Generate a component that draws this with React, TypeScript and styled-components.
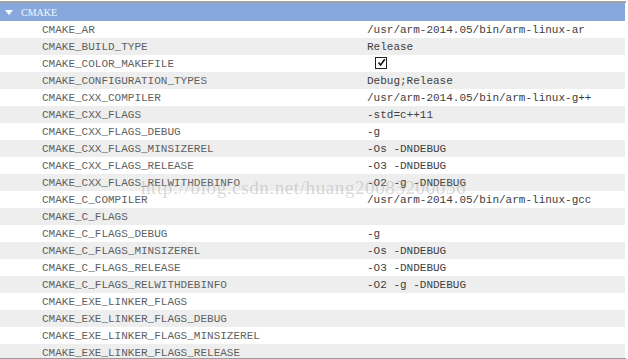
import React from 'react';
import styled, { createGlobalStyle } from 'styled-components';

const Global = createGlobalStyle`
  html, body {
    margin: 0;
    padding: 0;
    background: #fff;
  }
`;

const S = {
  Frame: styled.div`
    position: relative;
    width: 626px;
    height: 355px;
    margin-top: 1px;
    border-top: 2px solid #a3a3a3;
    border-bottom: 2px solid #9c9c9c;
    overflow: hidden;
    font-family: 'Liberation Mono', 'DejaVu Sans Mono', monospace;
    font-size: 11px;
  `,
  Header: styled.div`
    display: flex;
    align-items: center;
    gap: 8px;
    height: 18px;
    width: 625px;
    padding-left: 5px;
    box-sizing: border-box;
    background: #86a8dc;
    color: #f4f7fc;
    font-family: 'Liberation Serif', serif;
    font-size: 10px;
  `,
  Arrow: styled.span`
    width: 0;
    height: 0;
    border-left: 4px solid transparent;
    border-right: 4px solid transparent;
    border-top: 5px solid #fff;
  `,
  Row: styled.div<{ $alt: boolean }>`
    display: grid;
    grid-template-columns: 367px 1fr;
    align-items: center;
    height: 17px;
    width: 625px;
    background: ${(p) => (p.$alt ? '#eeeeee' : '#ffffff')};
  `,
  Name: styled.span`
    padding-left: 42px;
    color: #5f5f5f;
    white-space: nowrap;
  `,
  Value: styled.span`
    color: #3e3e3e;
    white-space: nowrap;
  `,
  Check: styled.span`
    display: inline-flex;
    align-items: center;
    justify-content: center;
    width: 10px;
    height: 10px;
    margin-left: 8px;
    border: 1px solid #222;
    background: #fff;
  `,
  Watermark: styled.div`
    position: absolute;
    left: 141px;
    top: 174px;
    font-family: 'Liberation Serif', serif;
    font-size: 19px;
    letter-spacing: 0.6px;
    color: rgba(170, 170, 170, 0.45);
    pointer-events: none;
    white-space: nowrap;
  `,
};

const rows: [string, string | 'check'][] = [
  ['CMAKE_AR', '/usr/arm-2014.05/bin/arm-linux-ar'],
  ['CMAKE_BUILD_TYPE', 'Release'],
  ['CMAKE_COLOR_MAKEFILE', 'check'],
  ['CMAKE_CONFIGURATION_TYPES', 'Debug;Release'],
  ['CMAKE_CXX_COMPILER', '/usr/arm-2014.05/bin/arm-linux-g++'],
  ['CMAKE_CXX_FLAGS', '-std=c++11'],
  ['CMAKE_CXX_FLAGS_DEBUG', '-g'],
  ['CMAKE_CXX_FLAGS_MINSIZEREL', '-Os -DNDEBUG'],
  ['CMAKE_CXX_FLAGS_RELEASE', '-O3 -DNDEBUG'],
  ['CMAKE_CXX_FLAGS_RELWITHDEBINFO', '-O2 -g -DNDEBUG'],
  ['CMAKE_C_COMPILER', '/usr/arm-2014.05/bin/arm-linux-gcc'],
  ['CMAKE_C_FLAGS', ''],
  ['CMAKE_C_FLAGS_DEBUG', '-g'],
  ['CMAKE_C_FLAGS_MINSIZEREL', '-Os -DNDEBUG'],
  ['CMAKE_C_FLAGS_RELEASE', '-O3 -DNDEBUG'],
  ['CMAKE_C_FLAGS_RELWITHDEBINFO', '-O2 -g -DNDEBUG'],
  ['CMAKE_EXE_LINKER_FLAGS', ''],
  ['CMAKE_EXE_LINKER_FLAGS_DEBUG', ''],
  ['CMAKE_EXE_LINKER_FLAGS_MINSIZEREL', ''],
  ['CMAKE_EXE_LINKER_FLAGS_RELEASE', ''],
];

function CheckMark() {
  return (
    <svg width="9" height="9" viewBox="0 0 9 9">
      <path d="M1.5 4.5 L3.6 7 L7.8 1.2" fill="none" stroke="#111" strokeWidth="1.6" />
    </svg>
  );
}

export default function App() {
  return (
    <>
      <Global />
      <S.Frame>
        <S.Header>
          <S.Arrow />
          CMAKE
        </S.Header>
        {rows.map(([name, value], i) => (
          <S.Row key={name} $alt={i % 2 === 1}>
            <S.Name>{name}</S.Name>
            {value === 'check' ? (
              <span>
                <S.Check>
                  <CheckMark />
                </S.Check>
              </span>
            ) : (
              <S.Value>{value}</S.Value>
            )}
          </S.Row>
        ))}
        <S.Watermark>http://blog.csdn.net/huang20083200056</S.Watermark>
      </S.Frame>
    </>
  );
}
